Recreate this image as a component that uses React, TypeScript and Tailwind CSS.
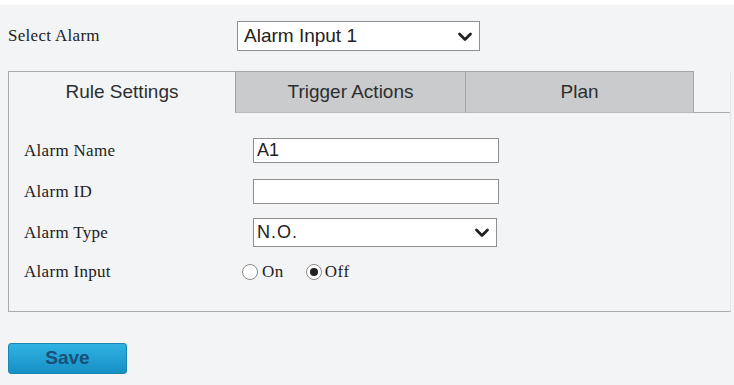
const serif = { fontFamily: '"Liberation Serif", "Times New Roman", serif' };
const sans = { fontFamily: '"Liberation Sans", Arial, sans-serif' };

function Chevron() {
  return (
    <svg className="w-[16px] h-[11px]" viewBox="0 0 16 11" fill="none" stroke="#222" strokeWidth={2.8} strokeLinecap="round" strokeLinejoin="round">
      <path d="M2.5 3l5.5 5.5 5.5-5.5" />
    </svg>
  );
}

function Radio({ checked }: { checked?: boolean }) {
  return (
    <span className="inline-flex items-center justify-center w-[16px] h-[16px] rounded-full border border-[#8a8a8a] bg-white">
      {checked && <span className="w-[8px] h-[8px] rounded-full bg-[#222]" />}
    </span>
  );
}

export default function App() {
  const rows = [
    { label: 'Alarm Name', h: 'h-[41px]' },
    { label: 'Alarm ID', h: 'h-[41px]' },
    { label: 'Alarm Type', h: 'h-[41px]' },
    { label: 'Alarm Input', h: 'h-[38px]' },
  ];

  return (
    <div className="w-[734px] h-[385px] bg-[#f2f4f6] text-[#222] overflow-hidden">
      <div className="h-[5px] bg-white" />

      {/* select alarm */}
      <div className="flex items-center mt-[16px] h-[30px]">
        <div className="w-[237px] pl-[8px] text-[17px] tracking-[0.3px] text-[#222]" style={serif}>Select Alarm</div>
        <div className="w-[243px] h-[30px] flex items-center justify-between bg-white border border-[#8f8f8f] pl-[6px] pr-[6px] text-[19px]" style={sans}>
          <span>Alarm Input 1</span>
          <Chevron />
        </div>
      </div>

      {/* panel */}
      <div className="ml-[8px] mt-[20px] w-[723px] border-l border-r border-b border-l-[#a9abad] border-r-[#e3e6e8] border-b-[#a9abad]">
        <div className="flex h-[42px] text-[19px] text-[#2e2e2e]" style={sans}>
          <div className="w-[226px] flex items-center justify-center border-t border-[#a9abad]">
            Rule Settings
          </div>
          <div className="w-[231px] flex items-center justify-center bg-[#c9cbcc] border border-[#a3a5a6] border-b-[#b8babb] pt-[1px]">
            Trigger Actions
          </div>
          <div className="w-[228px] flex items-center justify-center bg-[#c9cbcc] border-t border-r border-b border-[#a3a5a6] border-b-[#b8babb] pt-[1px]">
            Plan
          </div>
          <div className="flex-1 border-b border-[#a9abad]" />
        </div>

        <div className="flex flex-col pt-[17px] pb-[20px] pl-[15px]">
          {rows.map((r, i) => (
            <div key={r.label} className={`flex items-center ${r.h}`}>
              <div className={`${i === 3 ? 'w-[218px]' : 'w-[229px]'} text-[17px] tracking-[0.3px] text-[#222]`} style={serif}>
                {r.label}
              </div>
              {i === 0 && (
                <div className="w-[246px] h-[25px] flex items-center bg-white border border-[#8f8f8f] px-[3px] text-[18px]" style={sans}>A1</div>
              )}
              {i === 1 && <div className="w-[246px] h-[25px] bg-white border border-[#8f8f8f]" />}
              {i === 2 && (
                <div className="w-[244px] h-[29px] flex items-center justify-between bg-white border border-[#8f8f8f] pl-[3px] pr-[6px] text-[18px]" style={sans}>
                  <span className="tracking-[1px]">N.O.</span>
                  <Chevron />
                </div>
              )}
              {i === 3 && (
                <div className="flex items-center text-[17px] text-[#222]" style={serif}>
                  <Radio />
                  <span className="ml-[4px] mr-[22px] tracking-[0.5px]">On</span>
                  <Radio checked />
                  <span className="ml-[3px] tracking-[0.5px]">Off</span>
                </div>
              )}
            </div>
          ))}
        </div>
      </div>

      <button
        className="ml-[8px] mt-[31px] w-[119px] h-[31px] rounded-[3px] bg-gradient-to-b from-[#2fb2e3] to-[#1590c4] border border-[#1a86b5] text-[19px] font-bold text-[#17507a]"
        style={sans}
      >
        Save
      </button>
    </div>
  );
}
